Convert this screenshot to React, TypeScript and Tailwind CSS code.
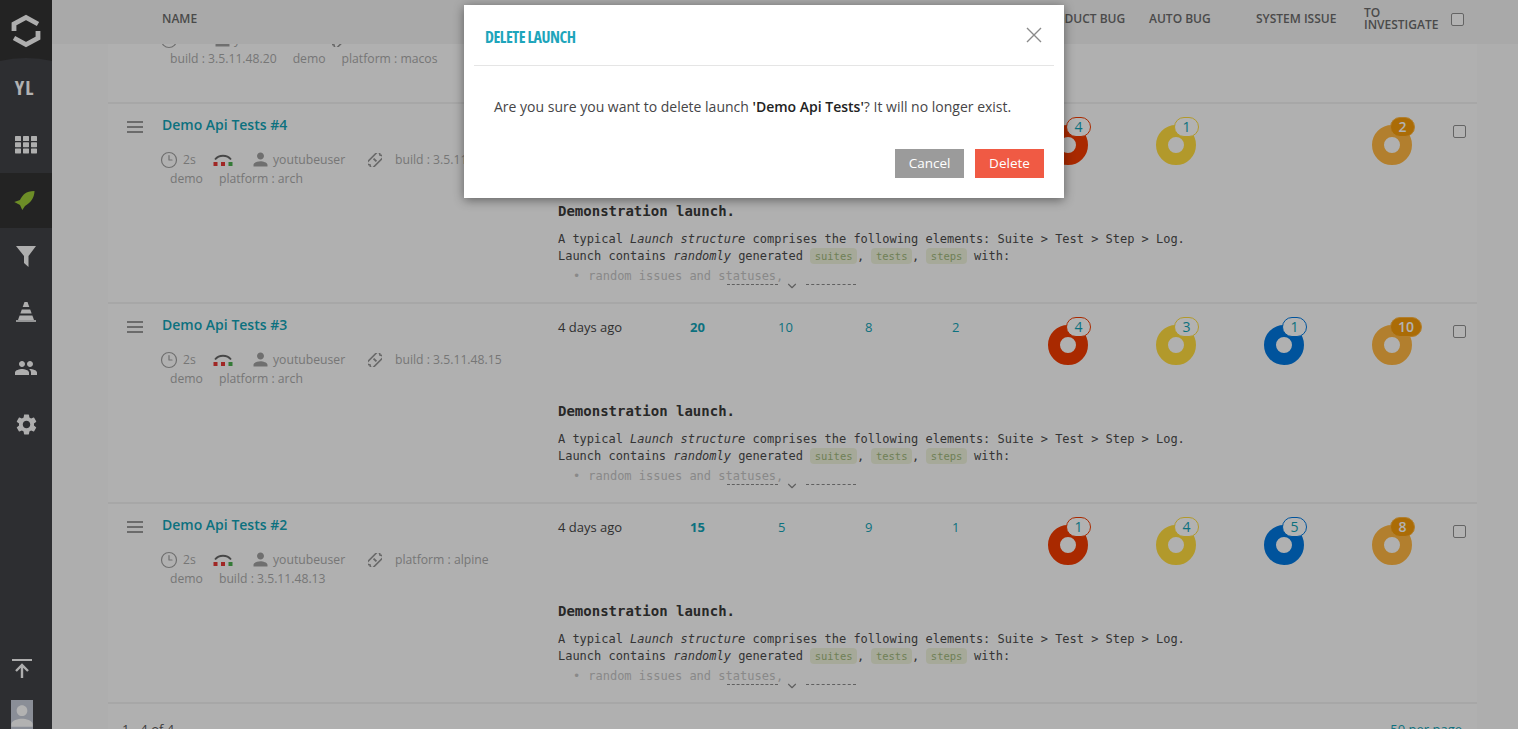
import React from "react";
import { Clock3, ChevronDown } from "lucide-react";
import { MdPeople, MdSettings, MdPerson } from "react-icons/md";

const MONO = "font-['DejaVu_Sans_Mono',monospace]";

function Hamburger() {
  return (
    <div className="flex flex-col gap-[3px] w-4 mt-[6px]">
      <div className="h-[2px] bg-[#9a9a9a]" />
      <div className="h-[2px] bg-[#9a9a9a]" />
      <div className="h-[2px] bg-[#9a9a9a]" />
    </div>
  );
}

function Meter() {
  return (
    <svg width="20" height="14" viewBox="0 0 20 14" className="shrink-0">
      <path d="M2 6.5 C6 1.5 14 1.5 18 6.5" fill="none" stroke="#666" strokeWidth="1.8" />
      <rect x="0.5" y="9" width="4" height="4" fill="#e53935" />
      <rect x="8" y="9" width="4" height="4" fill="#e53935" />
      <rect x="15.5" y="9" width="4" height="4" fill="#4caf50" />
    </svg>
  );
}

function TicketIcon() {
  return (
    <svg width="14" height="14" viewBox="0 0 14 14" className="shrink-0">
      <g transform="rotate(-45 7 7)" fill="none" stroke="#969696" strokeWidth="1.6">
        <path d="M-1 3 H15 V5.5 L14 7 L15 8.5 V11 H-1 V8.5 L0 7 L-1 5.5 Z" />
        <path d="M7 5 V9" strokeWidth="2" />
      </g>
    </svg>
  );
}

function Line1({ build1 }: { build1: string }) {
  return (
    <div className="flex items-center h-[19px]">
      <Clock3 size={18} strokeWidth={1.6} className="text-[#a0a0a0] shrink-0 -ml-[2px]" />
      <span className="ml-[5px] w-[18px]">2s</span>
      <span className="ml-[12px]"><Meter /></span>
      <MdPerson size={21} className="text-[#a0a0a0] ml-[17px] shrink-0" />
      <span className="ml-[2px] w-[70px]">youtubeuser</span>
      <span className="ml-[25px]"><TicketIcon /></span>
      <span className="ml-[13px] whitespace-nowrap">{build1}</span>
    </div>
  );
}

function ClippedLine() {
  return (
    <div className="flex items-center h-[19px]">
      <Clock3 size={18} strokeWidth={1.6} className="text-[#a0a0a0] shrink-0 -ml-[2px]" />
      <span className="ml-[5px] w-[18px]">2s</span>
      <MdPerson size={21} className="text-[#a0a0a0] ml-[11px] shrink-0" />
      <span className="ml-[1px] w-[70px]">youtubeuser</span>
      <span className="ml-[28px]"><TicketIcon /></span>
    </div>
  );
}

function Meta({ build1, line2 }: { build1: string; line2: string[] }) {
  return (
    <div className="text-[12.2px] leading-[19px] text-[#aaaaaa] mt-[15px]">
      <Line1 build1={build1} />
      <div className="flex gap-4 pl-2 h-[19px]">
        {line2.map((t) => <span key={t}>{t}</span>)}
      </div>
    </div>
  );
}

function Pill({ children }: { children: React.ReactNode }) {
  return <code className={`${MONO} text-[10.5px] text-[#9fb77b] bg-[#eef3dc] rounded-[4px] px-[4.5px] py-[2px]`}>{children}</code>;
}

function Description() {
  return (
    <div className={`${MONO} text-[#4b4b4b] mt-[56px]`}>
      <div className="text-[14px] font-bold leading-[20px] text-[#3a3a3a]">Demonstration launch.</div>
      <div className="text-[12px] leading-[17px] mt-[10px] whitespace-nowrap tracking-[-0.02px]">
        A typical <i>Launch structure</i> comprises the following elements: Suite &gt; Test &gt; Step &gt; Log.
      </div>
      <div className="text-[12px] leading-[17px] whitespace-nowrap tracking-[-0.02px]">
        Launch contains <i>randomly</i> generated <Pill>suites</Pill>, <Pill>tests</Pill>, <Pill>steps</Pill> with:
      </div>
      <div className="text-[12px] leading-[17px] text-[#c4c4c4] mt-[3px] whitespace-nowrap flex">
        <span className="ml-[15px] mr-[8px]">•</span>random issues and statuses,
      </div>
      <div className="flex items-center ml-[169px] -mt-[6px] h-[10px]">
        <div className="w-[51px] border-t border-dashed border-[#8a8a8a]" />
        <ChevronDown size={14} className="text-[#8a8a8a] mx-[7px] mt-[4px]" />
        <div className="w-[50px] border-t border-dashed border-[#8a8a8a]" />
      </div>
    </div>
  );
}

function Donut({ value, ring, badge }: { value?: number; ring: string; badge: string }) {
  return (
    <div className="w-[108px] flex justify-center">
      {value !== undefined && (
        <div className={`relative w-10 h-10 rounded-full border-[12px] mt-[8px] ${ring}`}>
          <div className={`absolute left-[6px] top-[-20px] h-5 px-[7px] min-w-[25px] rounded-full border flex items-center justify-center text-[14px] leading-none ${badge}`}>
            {value}
          </div>
        </div>
      )}
    </div>
  );
}

function Box() {
  return <div className="w-[13px] h-[13px] rounded-[2px] border border-[#909090] bg-white shrink-0" />;
}

type RowData = {
  name: string; build: string; line2: string[];
  total: number; p: number; f: number; s: number;
  d: (number | undefined)[];
};

function Row({ r }: { r: RowData }) {
  return (
    <div className="h-[200px] flex border-t-2 border-[#f0f0f0] pt-[11px] shrink-0">
      <div className="w-[54px] pl-[19px]"><Hamburger /></div>
      <div className="w-[396px]">
        <div className="text-[14px] font-semibold leading-[20px] text-[#12a3b6]">{r.name}</div>
        <Meta build1={r.build} line2={r.line2} />
      </div>
      <div className="flex-1 min-w-0">
        <div className="flex h-[30px] items-start text-[13px] leading-[20px] pt-[2px]">
          <div className="w-[132px] text-[#464547]">4 days ago</div>
          <div className="w-[88px] font-bold text-[#12a3b6]">{r.total}</div>
          <div className="w-[87px] text-[#12a3b6]">{r.p}</div>
          <div className="w-[87px] text-[#12a3b6]">{r.f}</div>
          <div className="w-[62px] text-[#12a3b6]">{r.s}</div>
          <Donut value={r.d[0]} ring="border-[#f33c00]" badge="bg-white border-[#f33c00] text-[#12a3b6]" />
          <Donut value={r.d[1]} ring="border-[#ffdc3e]" badge="bg-white border-[#ffdc3e] text-[#12a3b6]" />
          <Donut value={r.d[2]} ring="border-[#0078e0]" badge="bg-white border-[#0078e0] text-[#12a3b6]" />
          <Donut value={r.d[3]} ring="border-[#ffb743]" badge="bg-[#f59b0a] border-[#ffb743] text-white font-semibold" />
          <div className="ml-[7px] mt-[8px]"><Box /></div>
        </div>
        <Description />
      </div>
    </div>
  );
}

const rows: RowData[] = [
  { name: "Demo Api Tests #4", build: "build : 3.5.11.48.17", line2: ["demo", "platform : arch"], total: 15, p: 9, f: 4, s: 2, d: [4, 1, undefined, 2] },
  { name: "Demo Api Tests #3", build: "build : 3.5.11.48.15", line2: ["demo", "platform : arch"], total: 20, p: 10, f: 8, s: 2, d: [4, 3, 1, 10] },
  { name: "Demo Api Tests #2", build: "platform : alpine", line2: ["demo", "build : 3.5.11.48.13"], total: 15, p: 5, f: 9, s: 1, d: [1, 4, 5, 8] },
];

function SideItem({ children, cls }: { children: React.ReactNode; cls?: string }) {
  return <div className={`flex items-center justify-center ${cls ?? "h-[56px]"}`}>{children}</div>;
}

function Sidebar() {
  const ic = "#fafafa";
  return (
    <aside className="w-[52px] shrink-0 h-full bg-[#414247] flex flex-col">
      <div className="h-[61px] shrink-0 flex flex-col">
        <div className="h-[57px] bg-[#333333] flex items-center justify-center pt-[4px]">
          <svg width="32" height="36" viewBox="0 0 32 36" fill="none" stroke={ic} strokeWidth="4.8">
            <path d="M4 18 V11 L16 4.5 L28 11" />
            <path d="M28 18 V25 L16 31.5 L4 25" />
          </svg>
        </div>
        <svg width="52" height="4" viewBox="0 0 52 4" className="block">
          <path d="M0 0 H52 V4 Q26 -2 0 4 Z" fill="#333333" />
        </svg>
      </div>
      <SideItem cls="h-[56px] pb-[2px] pr-[3px]">
        <span className="text-[20px] font-bold text-white [font-stretch:75%] tracking-[1px]">YL</span>
      </SideItem>
      <SideItem>
        <svg width="22" height="18" viewBox="0 0 22 18" fill={ic}>
          {[0, 6.2, 12.4].map((y) => [0, 8, 16].map((x) => <rect key={`${x}-${y}`} x={x} y={y} width="6" height="5" rx="0.6" />))}
        </svg>
      </SideItem>
      <SideItem cls="h-[55px] bg-[#333333] pr-[2px]">
        <svg width="22" height="22" viewBox="0 0 22 22" fill="#9ccb38">
          <path d="M20.5 1 C16 1 13 2 11 3.5 C9 5 7 8 6 10 L0.3 12 L6 15 L8.3 20 L11 16 C14 14 16.5 12 17.7 10 C19.5 7.5 20.5 4 20.5 1 Z" />
        </svg>
      </SideItem>
      <SideItem>
        <svg width="20" height="21" viewBox="0 0 20 21" fill={ic}>
          <path d="M0 0 H20 L12.5 10 V21 L8 17 V10 Z" />
        </svg>
      </SideItem>
      <SideItem>
        <svg width="20" height="20" viewBox="0 0 20 20" fill={ic}>
          <path d="M8.5 0 H11.5 L13.3 5 H6.7 Z" />
          <path d="M5.8 7.5 H14.2 L15.65 11.5 H4.35 Z" />
          <path d="M3.6 13.5 H16.4 L18 18 H2 Z" />
          <rect x="0" y="18.2" width="20" height="1.6" />
        </svg>
      </SideItem>
      <SideItem><MdPeople size={24} color={ic} /></SideItem>
      <SideItem><MdSettings size={25} color={ic} /></SideItem>
      <div className="mt-auto flex flex-col items-start">
        <div className="pl-[12px]">
          <svg width="20" height="20" viewBox="0 0 20 20" fill="none" stroke={ic} strokeWidth="2" className="block">
            <path d="M0 1 H20" />
            <path d="M10 19 V6 M4 12 L10 6 L16 12" strokeWidth="2.4" />
          </svg>
        </div>
        <div className="ml-[11px] mt-[21px] w-[22px] h-[29px] bg-[#c6ccd9] flex items-start justify-center overflow-hidden shrink-0">
          <MdPerson size={32} color="#ffffff" className="shrink-0" />
        </div>
      </div>
    </aside>
  );
}

export default function App() {
  return (
    <div className="relative w-[1518px] h-[729px] overflow-hidden bg-[#f9f9f9] flex font-['Open_Sans',sans-serif]">
      <Sidebar />
      <main className="flex-1 min-w-0 h-full flex flex-col overflow-hidden">
        <header className="h-[44px] shrink-0 bg-[#f2f2f2] flex text-[12px] font-semibold text-[#6b6b6b] items-center pb-[6px]">
          <div className="w-[110px] pl-[110px]">NAME</div>
          <div className="w-[396px]" />
          <div className="flex items-center">
            <span className="w-[132px]">START TIME</span>
            <span className="w-[88px]">TOTAL</span>
            <span className="w-[87px]">PASSED</span>
            <span className="w-[87px]">FAILED</span>
            <span className="w-[88px]">SKIPPED</span>
            <span className="w-[109px] whitespace-nowrap">PRODUCT BUG</span>
            <span className="w-[107px]">AUTO BUG</span>
            <span className="w-[108px]">SYSTEM ISSUE</span>
            <span className="w-[87px] leading-[12px]">TO<br />INVESTIGATE</span>
            <Box />
          </div>
        </header>
        <div className="ml-[56px] w-[1369px] bg-[#fdfdfd] flex-1 flex flex-col overflow-hidden">
          <div className="h-[58px] shrink-0 overflow-hidden pl-[54px] text-[12.2px] text-[#aaaaaa] leading-[19px]">
            <div className="-mt-[14px]"><ClippedLine /></div>
            <div className="flex gap-4 pl-2">
              <span>build : 3.5.11.48.20</span><span>demo</span><span>platform : macos</span>
            </div>
          </div>
          {rows.map((r) => <Row key={r.name} r={r} />)}
          <div className="border-t-2 border-[#f0f0f0] h-[30px] shrink-0 flex justify-between pl-[14px] pr-[15px] pt-[16px] text-[13px] leading-[18px]">
            <span className="text-[#5a5a5a]">1 - 4 of 4</span>
            <span className="text-[#12a3b6]">50 per page</span>
          </div>
        </div>
      </main>

      <div className="absolute inset-0 bg-black/30" />

      <div className="absolute left-[464px] top-[5px] w-[600px] h-[193px] bg-white shadow-[0_2px_10px_rgba(0,0,0,0.45)]">
        <div className="mx-[10px] h-[61px] border-b border-[#e5e5e5] flex items-center justify-between pl-[11px] pr-[12px]">
          <span className="text-[16px] font-bold text-[#1ea5bb] [font-stretch:75%] tracking-[-0.45px] pt-[3px]">DELETE LAUNCH</span>
          <svg width="16" height="16" viewBox="0 0 16 16" fill="none" stroke="#8a8a8a" strokeWidth="1.4" className="-mt-[1px]">
            <path d="M1 1 L15 15 M15 1 L1 15" />
          </svg>
        </div>
        <div className="pl-[30px] mt-[31px] text-[14px] leading-[20px] text-[#464547]">
          Are you sure you want to delete launch <b className="font-semibold text-[#222]">'Demo Api Tests'</b>? It will no longer exist.
        </div>
        <div className="flex justify-end gap-[11px] pr-[20px] mt-[32px]">
          <button className="w-[69px] h-[29px] bg-[#9b9b9b] text-white text-[13.5px]">Cancel</button>
          <button className="w-[69px] h-[29px] bg-[#f05a44] text-white text-[13.5px]">Delete</button>
        </div>
      </div>
    </div>
  );
}
